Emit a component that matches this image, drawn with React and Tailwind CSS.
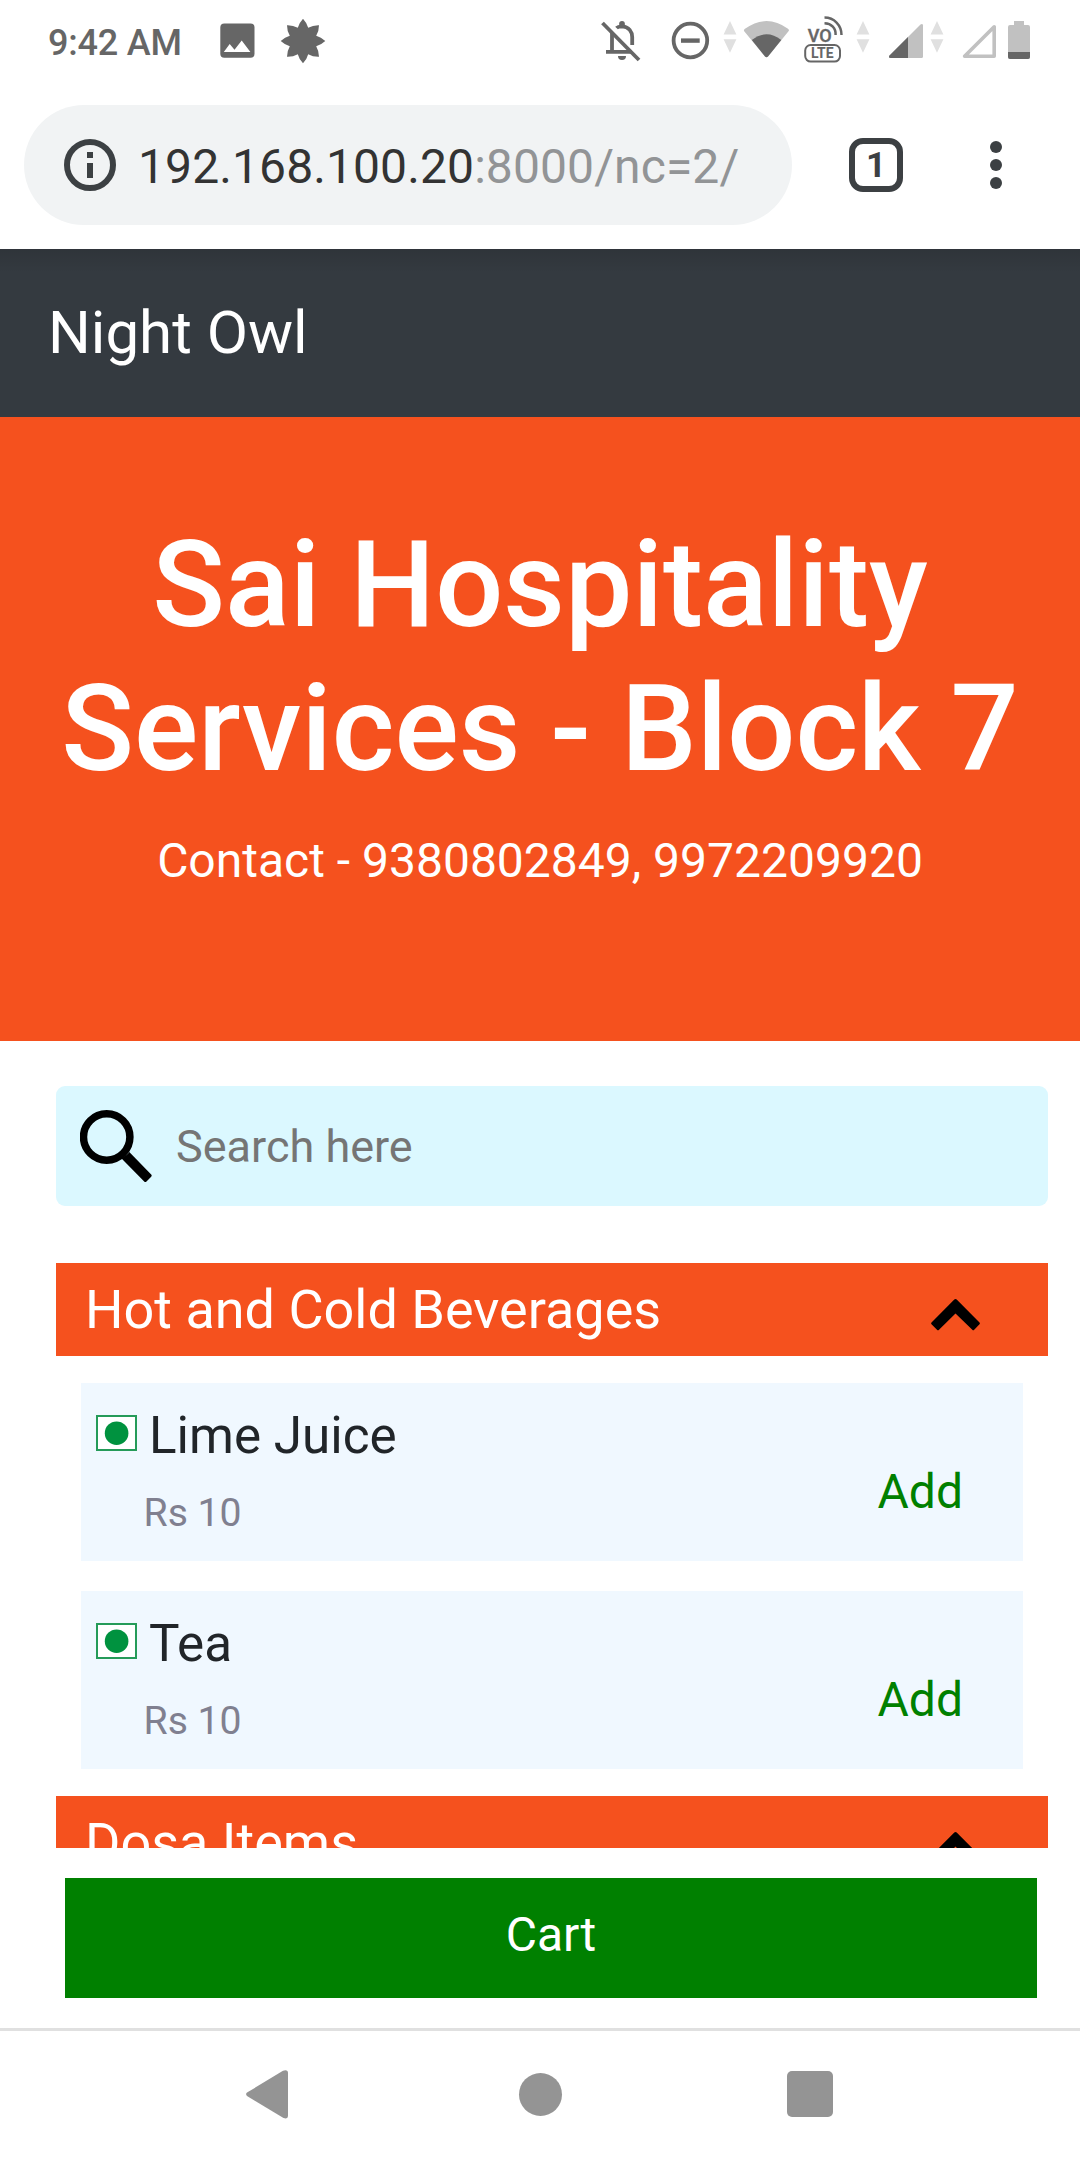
import React from "react";

const items = [
  { name: "Lime Juice", price: "Rs 10" },
  { name: "Tea", price: "Rs 10" },
];

function DataArrows({ className }) {
  return (
    <svg className={className} width="14" height="32" viewBox="0 0 14 32" fill="#e0e0e0">
      <path d="M7 0L13.4 13.4H.6zM.6 18.2H13.4L7 31.8z" />
    </svg>
  );
}

function StatusBar() {
  return (
    <div className="flex h-[84px] shrink-0 items-start text-[#666666]">
      <div className="ml-[48px] mt-[17px] w-[140px] whitespace-nowrap text-[36px] font-medium leading-[52px] tracking-[-0.2px]">9:42 AM</div>
      <svg className="ml-[32px] mt-[23px]" width="35" height="35" viewBox="0 0 35 35">
        <rect x=".3" y=".5" width="34.2" height="34.2" rx="4" fill="currentColor" />
        <path d="M3.8 29L9.7 21L14.5 26.8L21.7 17.6L30.4 29z" fill="#fff" />
      </svg>
      <svg className="ml-[25px] mt-[18px]" width="46" height="46" viewBox="-23 -23 46 46" fill="currentColor">
        <path d="M0 -22.3Q4 -18 5.2 -13.2Q10 -16 16 -15.8Q16 -10 13.2 -5.2Q18 -4 22.3 0Q18 4 13.2 5.2Q16 10 16 15.8Q10 16 5.2 13.2Q4 18 0 22.3Q-4 18 -5.2 13.2Q-10 16 -16 15.8Q-16 10 -13.2 5.2Q-18 4 -22.3 0Q-18 -4 -13.2 -5.2Q-16 -10 -16 -15.8Q-10 -16 -5.2 -13.2Q-4 -18 0 -22.3z" />
      </svg>
      <svg className="ml-[274px] mt-[18px]" width="42" height="46" viewBox="600 18 42 46" fill="none" stroke="currentColor" strokeWidth="3.8">
        <path d="M602.5 23L639 60" />
        <path d="M612 33V51M606 51.8H631.5" />
        <path d="M616.5 28Q618 26.5 622 26.3C629 26.5 632.2 32 632.2 37V45" />
        <circle cx="622" cy="24" r="2.9" fill="currentColor" stroke="none" />
        <path d="M618 56H626A4 4 0 0 1 618 56z" fill="currentColor" stroke="none" />
      </svg>
      <svg className="ml-[29px] mt-[21px]" width="39" height="39" viewBox="671 21 39 39" fill="none" stroke="currentColor">
        <circle cx="690.4" cy="40.5" r="16.8" strokeWidth="3.8" />
        <path d="M681 40.6H699.7" strokeWidth="4.4" />
      </svg>
      <DataArrows className="ml-[13px] mt-[21px]" />
      <svg className="ml-[6px] mt-[20px]" width="48" height="38" viewBox="743 20 48 38">
        <path d="M744 31Q743.6 29.8 745 28.8Q766.6 13.3 788 28.8Q789.4 29.8 788.7 31L768 56.5Q766.5 57.8 765 56.5z" fill="#c1c1c1" />
        <path d="M751.8 40Q766.5 28.6 781.3 40L768 56.5Q766.5 57.8 765 56.5z" fill="#666" />
      </svg>
      <svg className="ml-[11px] mt-[15px]" width="44" height="50" viewBox="802 15 44 50" fill="none" stroke="currentColor" strokeWidth="2.5">
        <text x="807.8" y="41.5" fontFamily="Roboto, sans-serif" fontWeight="500" fontSize="19" textLength="24" lengthAdjust="spacingAndGlyphs" fill="currentColor" strokeWidth=".4">VO</text>
        <path d="M824.5 17.6C834 17.6 841.5 25 841.5 35M824.5 23.3C831.5 23.6 836 28 835.6 35" />
        <rect x="805.2" y="45" width="34.8" height="16.6" rx="5.5" strokeWidth="2" />
        <text x="811" y="58.3" fontFamily="Roboto, sans-serif" fontWeight="700" fontSize="14.5" textLength="22.5" lengthAdjust="spacingAndGlyphs" fill="currentColor" stroke="none">LTE</text>
      </svg>
      <DataArrows className="ml-[10px] mt-[21px]" />
      <svg className="ml-[18px] mt-[23px]" width="36" height="36" viewBox="888 23 36 36">
        <path d="M890.5 58Q888 57.5 889.5 55.5L920.5 24.6Q922.8 23.3 923 25.5V56.5Q923 58 921.5 58z" fill="#c1c1c1" />
        <path d="M890.5 58Q888 57.5 889.5 55.5L908 37V58z" fill="#666" />
      </svg>
      <DataArrows className="ml-[6px] mt-[21px]" />
      <svg className="ml-[17px] mt-[23px]" width="36" height="36" viewBox="961 23 36 36" fill="none">
        <path d="M964.6 56.3L994.2 26.8V56.3z" stroke="#c1c1c1" strokeWidth="3.6" strokeLinejoin="round" />
      </svg>
      <svg className="ml-[11px] mt-[21px]" width="22" height="38" viewBox="0 0 22 38">
        <path d="M6 0H16V4H20Q22 4 22 6V36Q22 38 20 38H2Q0 38 0 36V6Q0 4 2 4H6z" fill="#c1c1c1" />
        <path d="M0 31H22V36Q22 38 20 38H2Q0 38 0 36z" fill="#666" />
      </svg>
    </div>
  );
}

function BrowserBar() {
  return (
    <div className="flex h-[165px] shrink-0 items-start pl-6 pt-[21px] text-[#3c4043]">
      <div className="flex h-[120px] w-[768px] items-center rounded-full bg-[#f1f3f4] pl-10">
        <svg width="52" height="52" viewBox="0 0 52 52" fill="none" stroke="currentColor">
          <circle cx="26" cy="26" r="23" strokeWidth="6" />
          <path d="M26 13V19M26 24V39" strokeWidth="6" />
        </svg>
        <div className="ml-[22px] mt-[3px] whitespace-nowrap text-[48px] leading-[72px] tracking-[0.1px] text-[#333333]">
          192.168.100.20<span className="text-[#929496]">:8000/nc=2/</span>
        </div>
      </div>
      <div className="ml-[57px] mt-[33px] flex h-[54px] w-[54px] items-center justify-center rounded-[14px] border-[6px] border-[#3c4043] pt-[2px] text-[35px] font-bold leading-[40px]">1</div>
      <svg className="ml-[87px] mt-[36px]" width="12" height="48" viewBox="0 0 12 48" fill="currentColor">
        <circle cx="6" cy="6" r="6" />
        <circle cx="6" cy="24" r="6" />
        <circle cx="6" cy="42" r="6" />
      </svg>
    </div>
  );
}

function SectionHeader({ title }) {
  return (
    <div className="flex h-[93px] shrink-0 items-start justify-between bg-[#f5511e] pl-[29px] pr-[68px]">
      <h2 className="mt-[6px] text-[54px] leading-[81px] text-white">{title}</h2>
      <svg className="mt-[36px]" width="49" height="32" viewBox="0 0 49 32">
        <path d="M23.3 .5Q24.5 -.5 25.7 .5L48.5 23.4Q49.3 24.3 48.5 25.2L43.2 30.8Q42.3 31.8 41.3 30.8L24.5 14.6L8 30.8Q7 31.8 6 30.8L.5 25.2Q-.3 24.3 .5 23.4z" />
      </svg>
    </div>
  );
}

function MenuItem({ item }) {
  return (
    <div className="mx-[25px] flex h-[178px] shrink-0 justify-between bg-[#f0f8ff] pl-[15px] pr-[60px]">
      <div>
        <div className="mt-[14px] flex h-[78px] items-start">
          <svg className="mt-[18px]" width="41" height="36" viewBox="0 0 41 36">
            <rect x="1" y="1" width="39" height="34" fill="#fff" stroke="#259b59" strokeWidth="2" />
            <circle cx="20.6" cy="18.2" r="11.8" fill="#00923f" />
          </svg>
          <span className="ml-[12px] text-[51.2px] leading-[78px] text-[#212529]">{item.name}</span>
        </div>
        <div className="ml-[47.5px] mt-[8px] text-[39.2px] leading-[60px] text-[#808090]">{item.price}</div>
      </div>
      <button className="mt-[73px] h-[72px] text-[48px] leading-[72px] text-[#008000]">Add</button>
    </div>
  );
}

export default function App() {
  return (
    <div className="flex h-[2160px] w-[1080px] flex-col overflow-hidden bg-white font-[Roboto,sans-serif]">
      <StatusBar />
      <BrowserBar />
      <nav className="h-[168px] shrink-0 bg-[#343a40] bg-[linear-gradient(to_bottom,rgba(0,0,0,0.1),transparent_24px)] pl-12">
        <div className="pt-[39px] text-[60px] leading-[90px] text-white">Night Owl</div>
      </nav>
      <header className="h-[624px] shrink-0 bg-[#f5511e] pt-[96px] text-center text-white">
        <h1 className="text-[120px] font-medium leading-[144px]">
          Sai Hospitality
          <br />
          Services - Block 7
        </h1>
        <p className="mt-[24px] text-[48px] leading-[72px]">Contact - 9380802849, 9972209920</p>
      </header>
      <main className="flex h-[807px] shrink-0 flex-col overflow-hidden pl-14 pr-8 pt-[45px]">
        <div className="flex h-[120px] shrink-0 items-start rounded-[9px] bg-[#dbf8ff] pl-6">
          <svg className="mt-[24px]" width="72" height="73" viewBox="80 1110 72 73">
            <circle cx="106.7" cy="1137" r="23.2" fill="none" stroke="#000" strokeWidth="7.5" />
            <path d="M129.3 1152L151.2 1174.4Q152.2 1175.6 151.2 1176.7L146.5 1181.5Q145.3 1182.6 144.2 1181.5L121.3 1158.3Q127 1155.5 129.3 1152z" />
          </svg>
          <div className="ml-[24px] mt-[27px] text-[45px] leading-[68px] text-[#757575]">Search here</div>
        </div>
        <div className="mt-[57px] flex flex-col">
          <SectionHeader title="Hot and Cold Beverages" />
          <div className="flex flex-col gap-[30px] pb-[27px] pt-[27px]">
            {items.map((item) => (
              <MenuItem key={item.name} item={item} />
            ))}
          </div>
          <SectionHeader title="Dosa Items" />
        </div>
      </main>
      <div className="h-[180px] shrink-0 pl-[65px] pr-[43px] pt-[30px]">
        <button className="block h-[120px] w-full bg-[#008000] pb-[6px] text-[48px] leading-[72px] text-white">Cart</button>
      </div>
      <div className="flex h-[132px] shrink-0 items-center border-t-[3px] border-[#e0e0e0] pb-[3px] pl-[246px]">
        <svg width="42" height="49" viewBox="0 0 42 49" fill="#949494">
          <path d="M1 22.6L37 .7Q42 -.8 42 3V46Q42 49.5 37.5 48L1 26Q-.8 24.3 1 22.6z" />
        </svg>
        <div className="ml-[231px] h-[43px] w-[43px] rounded-full bg-[#949494]" />
        <div className="ml-[225px] h-[46px] w-[46px] rounded-[5px] bg-[#949494]" />
      </div>
    </div>
  );
}
